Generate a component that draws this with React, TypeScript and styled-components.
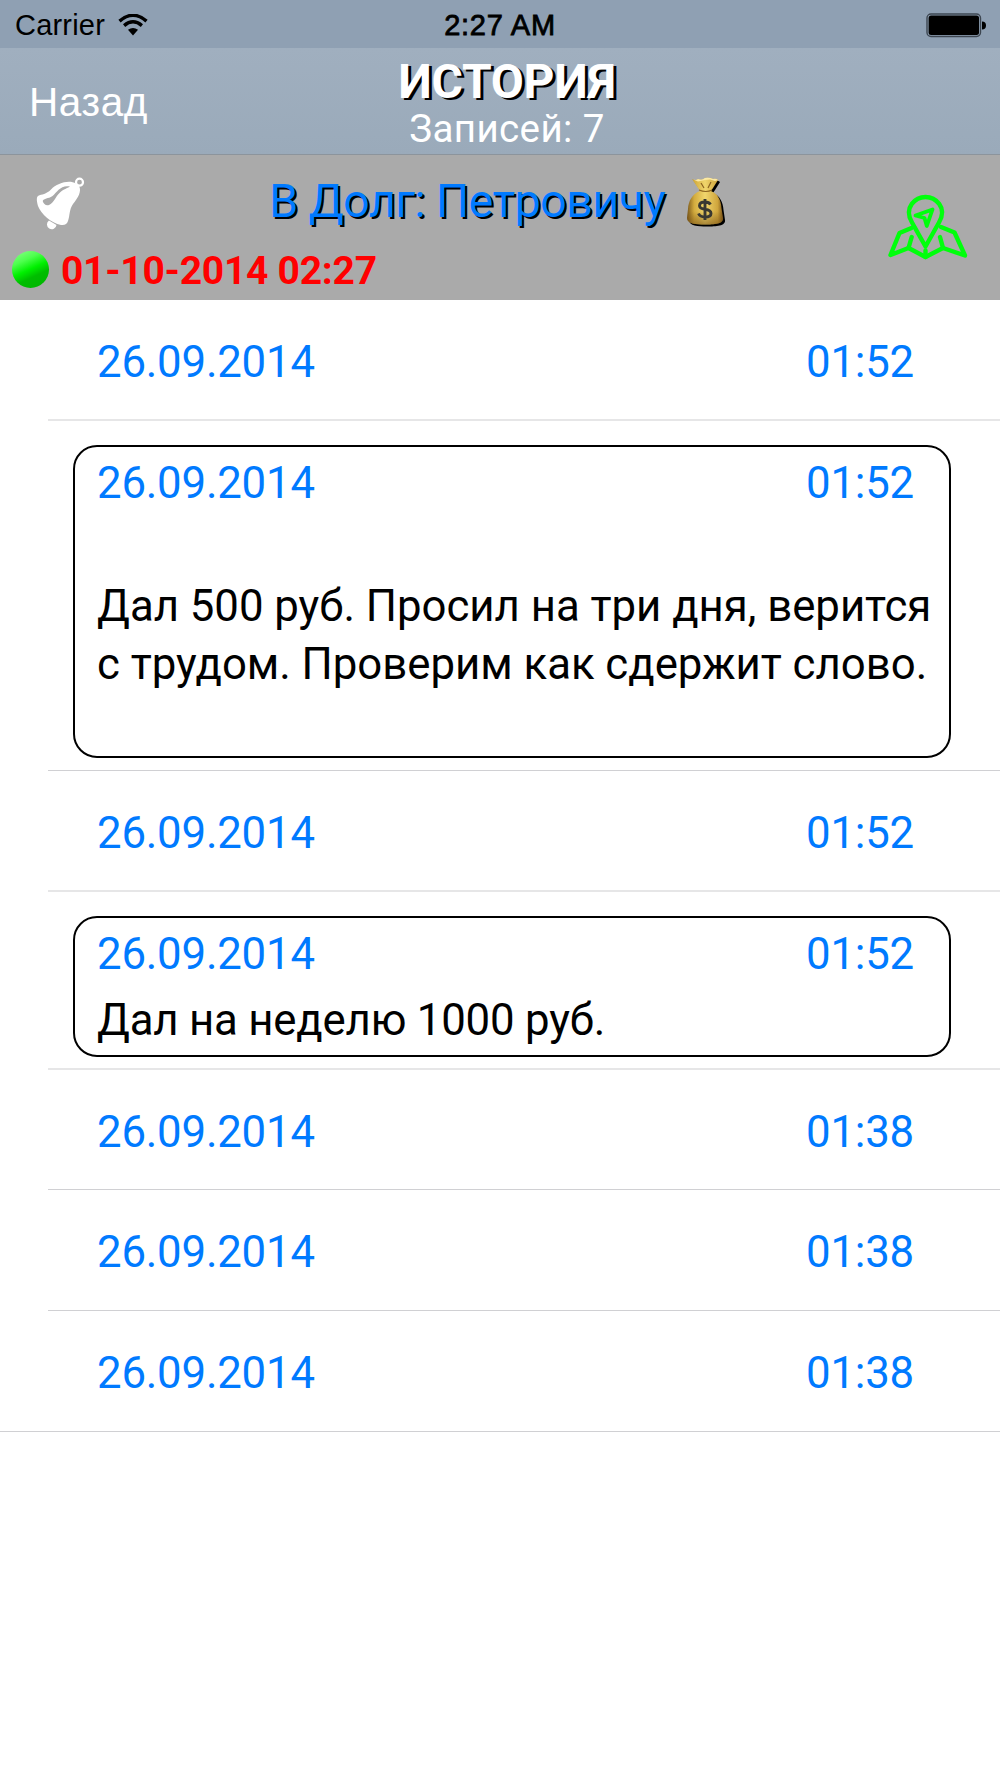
import React from "react";
import styled, { createGlobalStyle } from "styled-components";

const GlobalStyle = createGlobalStyle`
  * { box-sizing: border-box; }
  body { margin: 0; background: #fff; }
`;

const Screen = styled.main`
  width: 1000px;
  height: 1778px;
  background: #fff;
  font-family: Roboto, "Noto Sans", sans-serif;
  white-space: nowrap;
  overflow: hidden;
`;

const StatusBar = styled.div`
  display: grid;
  grid-template-columns: 1fr auto 1fr;
  align-items: center;
  height: 48px;
  padding: 1px 14px 0 14px;
  background: #8fa0b3;
  color: #000;
  font: 29px/48px "Liberation Sans", Arial, sans-serif;
`;

const Carrier = styled.div`
  display: flex;
  align-items: center;
  gap: 13px;
  padding-left: 1px;
  letter-spacing: 0.2px;
`;

const Clock = styled.div`
  letter-spacing: 0.75px;
  -webkit-text-stroke: 0.8px #000;
`;

const Battery = styled.svg`
  justify-self: end;
`;

const NavBar = styled.header`
  display: grid;
  grid-template-columns: 1fr auto 1fr;
  height: 107px;
  background: linear-gradient(#a0afbf, #9aaaba);
  border-bottom: 1px solid #8c949c;
  color: #fff;
`;

const BackButton = styled.button`
  justify-self: start;
  align-self: start;
  margin: 30px 0 0 29px;
  padding: 0;
  border: 0;
  background: none;
  color: inherit;
  font: 40.5px/48px "Liberation Sans", Arial, sans-serif;
  letter-spacing: 0.6px;
`;

const Titles = styled.div`
  display: flex;
  flex-direction: column;
  align-items: center;
  padding: 9px 0 0 14px;
`;

const Title = styled.h1`
  margin: 0;
  font-size: 48px;
  font-weight: 700;
  line-height: 50px;
  letter-spacing: -0.3px;
  text-shadow: 3px 2px 0 #000;
`;

const Count = styled.div`
  font-size: 38.5px;
  line-height: 46px;
  margin-top: -1px;
  letter-spacing: 0.4px;
`;

const Summary = styled.section`
  display: grid;
  grid-template-columns: 90px 1fr 112px;
  grid-template-rows: 90px 55px;
  height: 145px;
  background: #aaa;
`;

const BellIcon = styled.svg`
  margin: 20px 0 0 34px;
`;

const Debt = styled.h2`
  display: flex;
  align-items: flex-start;
  justify-content: flex-start;
  gap: 21px;
  margin: 0;
  padding: 19px 0 0 179px;
  color: #007aff;
  font-size: 46.9px;
  font-weight: 400;
  line-height: 54px;
  letter-spacing: -0.68px;
  text-shadow: 2px 2px 0 #000;
`;

const BagIcon = styled.svg`
  flex: none;
  margin-top: 2px;
`;

const MapIcon = styled.svg`
  grid-row: 1 / 3;
  grid-column: 3;
  margin: 39px 0 0 0;
`;

const DueDate = styled.div`
  grid-column: 1 / 3;
  grid-row: 2;
  display: flex;
  align-items: flex-start;
  gap: 12px;
  padding: 2px 0 0 12px;
  color: #f00;
  font-size: 39px;
  font-weight: 700;
  line-height: 48px;
  letter-spacing: -0.26px;
`;

const Dot = styled.span`
  width: 37px;
  height: 37px;
  margin-top: 4px;
  border-radius: 50%;
  background:
    linear-gradient(155deg, #7cff7c 8%, #4dff4d 28%, #00f000 49%, #00bd00 66%, #00b400 100%);
`;

const List = styled.ul`
  margin: 0;
  padding: 0;
  list-style: none;
`;

const Item = styled.li<{ $height: number; $line: number; $last?: boolean }>`
  display: flex;
  flex-direction: column;
  height: ${(p) => p.$height}px;

  &::after {
    content: "";
    flex: none;
    height: ${(p) => p.$line}px;
    margin-top: auto;
    margin-left: ${(p) => (p.$last ? 0 : 48)}px;
    background: ${(p) => (p.$line === 1 ? "#d0d0d3" : "#e6e6e7")};
  }
`;

const Entry = styled.div<{ $card: boolean; $height: number }>`
  height: ${(p) => p.$height}px;
  width: 878px;
  margin: 24px 0 0 73px;
  padding: 10px 15px 0 22px;
  border: 2px solid ${(p) => (p.$card ? "#000" : "transparent")};
  border-radius: 24px;
`;

const Stamp = styled.div`
  display: flex;
  justify-content: space-between;
  padding-right: 20px;
  color: #007aff;
  font-size: 43.75px;
  line-height: 52px;
  letter-spacing: -0.2px;
`;

const Note = styled.p<{ $gap: number; $tracking: number }>`
  margin: ${(p) => p.$gap}px 0 0;
  color: #000;
  font-size: 43.75px;
  line-height: 58px;
  letter-spacing: ${(p) => p.$tracking}px;
  white-space: pre;
`;

type Log = {
  date: string;
  time: string;
  note?: string;
  gap?: number;
  tracking?: number;
  height: number;
  line: number;
};

const logs: Log[] = [
  { date: "26.09.2014", time: "01:52", height: 121, line: 2 },
  {
    date: "26.09.2014",
    time: "01:52",
    note: "Дал 500 руб. Просил на три дня, верится\nс трудом. Проверим как сдержит слово.",
    gap: 68,
    tracking: -0.02,
    height: 350,
    line: 1,
  },
  { date: "26.09.2014", time: "01:52", height: 121, line: 2 },
  {
    date: "26.09.2014",
    time: "01:52",
    note: "Дал на неделю 1000 руб.",
    gap: 11,
    tracking: -0.2,
    height: 178,
    line: 2,
  },
  { date: "26.09.2014", time: "01:38", height: 120, line: 1 },
  { date: "26.09.2014", time: "01:38", height: 121, line: 1 },
  { date: "26.09.2014", time: "01:38", height: 121, line: 1 },
];

export default function App() {
  return (
    <Screen>
      <GlobalStyle />
      <StatusBar>
        <Carrier>
          Carrier
          <svg width="30" height="22" viewBox="0 0 30 22">
            <path d="M1.5 7.1Q15-4.6 28.5 7.1" fill="none" stroke="#000" strokeWidth="3.4" />
            <path d="M6.1 11.6Q15 4.1 23.9 11.6" fill="none" stroke="#000" strokeWidth="3.4" />
            <path d="M10 15.8Q15 12 20 15.8L15 21.5Z" />
          </svg>
        </Carrier>
        <Clock>2:27 AM</Clock>
        <Battery width="60" height="25" viewBox="0 0 60 25">
          <rect x="1" y="1" width="53.5" height="22.5" rx="4" fill="none" stroke="#3d4651" strokeWidth="1.4" />
          <rect x="2.6" y="2.4" width="50.4" height="19.6" rx="2.5" />
          <path d="M56 8.5a4 4 0 0 1 0 8Z" />
        </Battery>
      </StatusBar>
      <NavBar>
        <BackButton>Назад</BackButton>
        <Titles>
          <Title>ИСТОРИЯ</Title>
          <Count>Записей: 7</Count>
        </Titles>
      </NavBar>
      <Summary>
        <BellIcon width="52" height="56" viewBox="0 0 52 56">
          <circle cx="45.5" cy="7.2" r="3.5" fill="none" stroke="#fff" strokeWidth="2.2" />
          <path
            d="M42 8.4C35 4.5 23 8 17 14.5C12 19.5 8 19 4 21C2 23 3 27 4 31C7 39 17 48 27 50C31 50.5 33 49 34 46C36 40 35 35 39 29C44 23 48 16 45 11Z"
            fill="#fff"
          />
          <path
            d="M36 11.5C27 9.5 23 17 18.5 21C14 24 10 23 8.7 26C9.5 29 12 31 15 30C20 28 21 22 26 17.5C30 14 33 13.5 36 11.5Z"
            fill="#aaa"
          />
          <path d="M15 45.5L22.5 50A4.8 4.8 0 1 1 15 45.5Z" fill="#fff" />
        </BellIcon>
        <Debt>
          В Долг: Петровичу
          <BagIcon width="42" height="54" viewBox="0 0 42 54">
            <defs>
              <linearGradient id="gold" x1="0" x2="1">
                <stop offset="0" stopColor="#79571b" />
                <stop offset=".2" stopColor="#d3ac3e" />
                <stop offset=".5" stopColor="#f0d56c" />
                <stop offset=".85" stopColor="#cfa53c" />
                <stop offset="1" stopColor="#7a541a" />
              </linearGradient>
              <linearGradient id="shade" x2="0" y2="1">
                <stop offset=".6" stopColor="#704910" stopOpacity="0" />
                <stop offset="1" stopColor="#704910" stopOpacity=".55" />
              </linearGradient>
            </defs>
            <path
              d="M6 3Q10 5 12 3Q16 5 19 2Q23 1 27 3Q30 2 32 4L27 12L25 15C32 18 35 24 35.5 32L37 42C38 48 28 48.5 19 48.5S1 48 1 42L2 33C2.5 25 6 18 14 15L12 12Z"
              transform="translate(2 2)"
            />
            <path
              d="M6 3Q10 5 12 3Q16 5 19 2Q23 1 27 3Q30 2 32 4L27 12L25 15C32 18 35 24 35.5 32L37 42C38 48 28 48.5 19 48.5S1 48 1 42L2 33C2.5 25 6 18 14 15L12 12Z"
              fill="url(#gold)"
            />
            <path
              d="M14 15C6 18 2.5 25 2 33L1 42C1 48 10 48.5 19 48.5S38 48 37 42L35.5 32C35 24 32 18 25 15Z"
              fill="url(#shade)"
            />
            <path d="M6 3Q10 5 12 3Q16 5 19 2Q23 1 27 3Q30 2 32 4L29 5L24 3.5L19 4L12 5.5Z" fill="#fbe9a4" />
            <path d="M13 14Q20 17 26 14M15 7L18 12M25 6L22 12" fill="none" stroke="#8c6420" strokeWidth="1.2" />
            <path
              d="M24.5 28.5Q23 26 19 26Q13.5 26 13.5 29.7Q13.5 32.5 19 33.3Q25 34.3 25 37.5Q25 41 19 41Q14 41 12.5 37.5M19 23V44"
              fill="none"
              stroke="#393832"
              strokeWidth="2.9"
            />
          </BagIcon>
        </Debt>
        <MapIcon width="80" height="68" viewBox="0 0 80 68" fill="none" stroke="#00ff0c" strokeWidth="4.4" strokeLinecap="round" strokeLinejoin="round">
          <path d="M37.5 52.5L24 28.500C15 13 28 3 37.5 3S60 13 51 28.5Z" />
          <path d="M44.5 15.500L38.8 32L36.5 24L27.5 21.5Z" strokeWidth="3.8" />
          <path d="M23.5 34L11.5 39L2.5 61L20.5 54L37.5 63L55 54L77 61.5L66.5 38.5L53 33" />
          <path d="M20.5 54L23.7 43M55 54L52 43M37.5 56.5V63" />
        </MapIcon>
        <DueDate>
          <Dot />
          01-10-2014 02:27
        </DueDate>
      </Summary>
      <List>
        {logs.map((log, i) => (
          <Item key={i} $height={log.height} $line={log.line} $last={i === logs.length - 1}>
            <Entry $card={!!log.note} $height={log.note ? log.height - 37 : 80}>
              <Stamp>
                <span>{log.date}</span>
                <span>{log.time}</span>
              </Stamp>
              {log.note && (
                <Note $gap={log.gap ?? 0} $tracking={log.tracking ?? 0}>
                  {log.note}
                </Note>
              )}
            </Entry>
          </Item>
        ))}
      </List>
    </Screen>
  );
}
